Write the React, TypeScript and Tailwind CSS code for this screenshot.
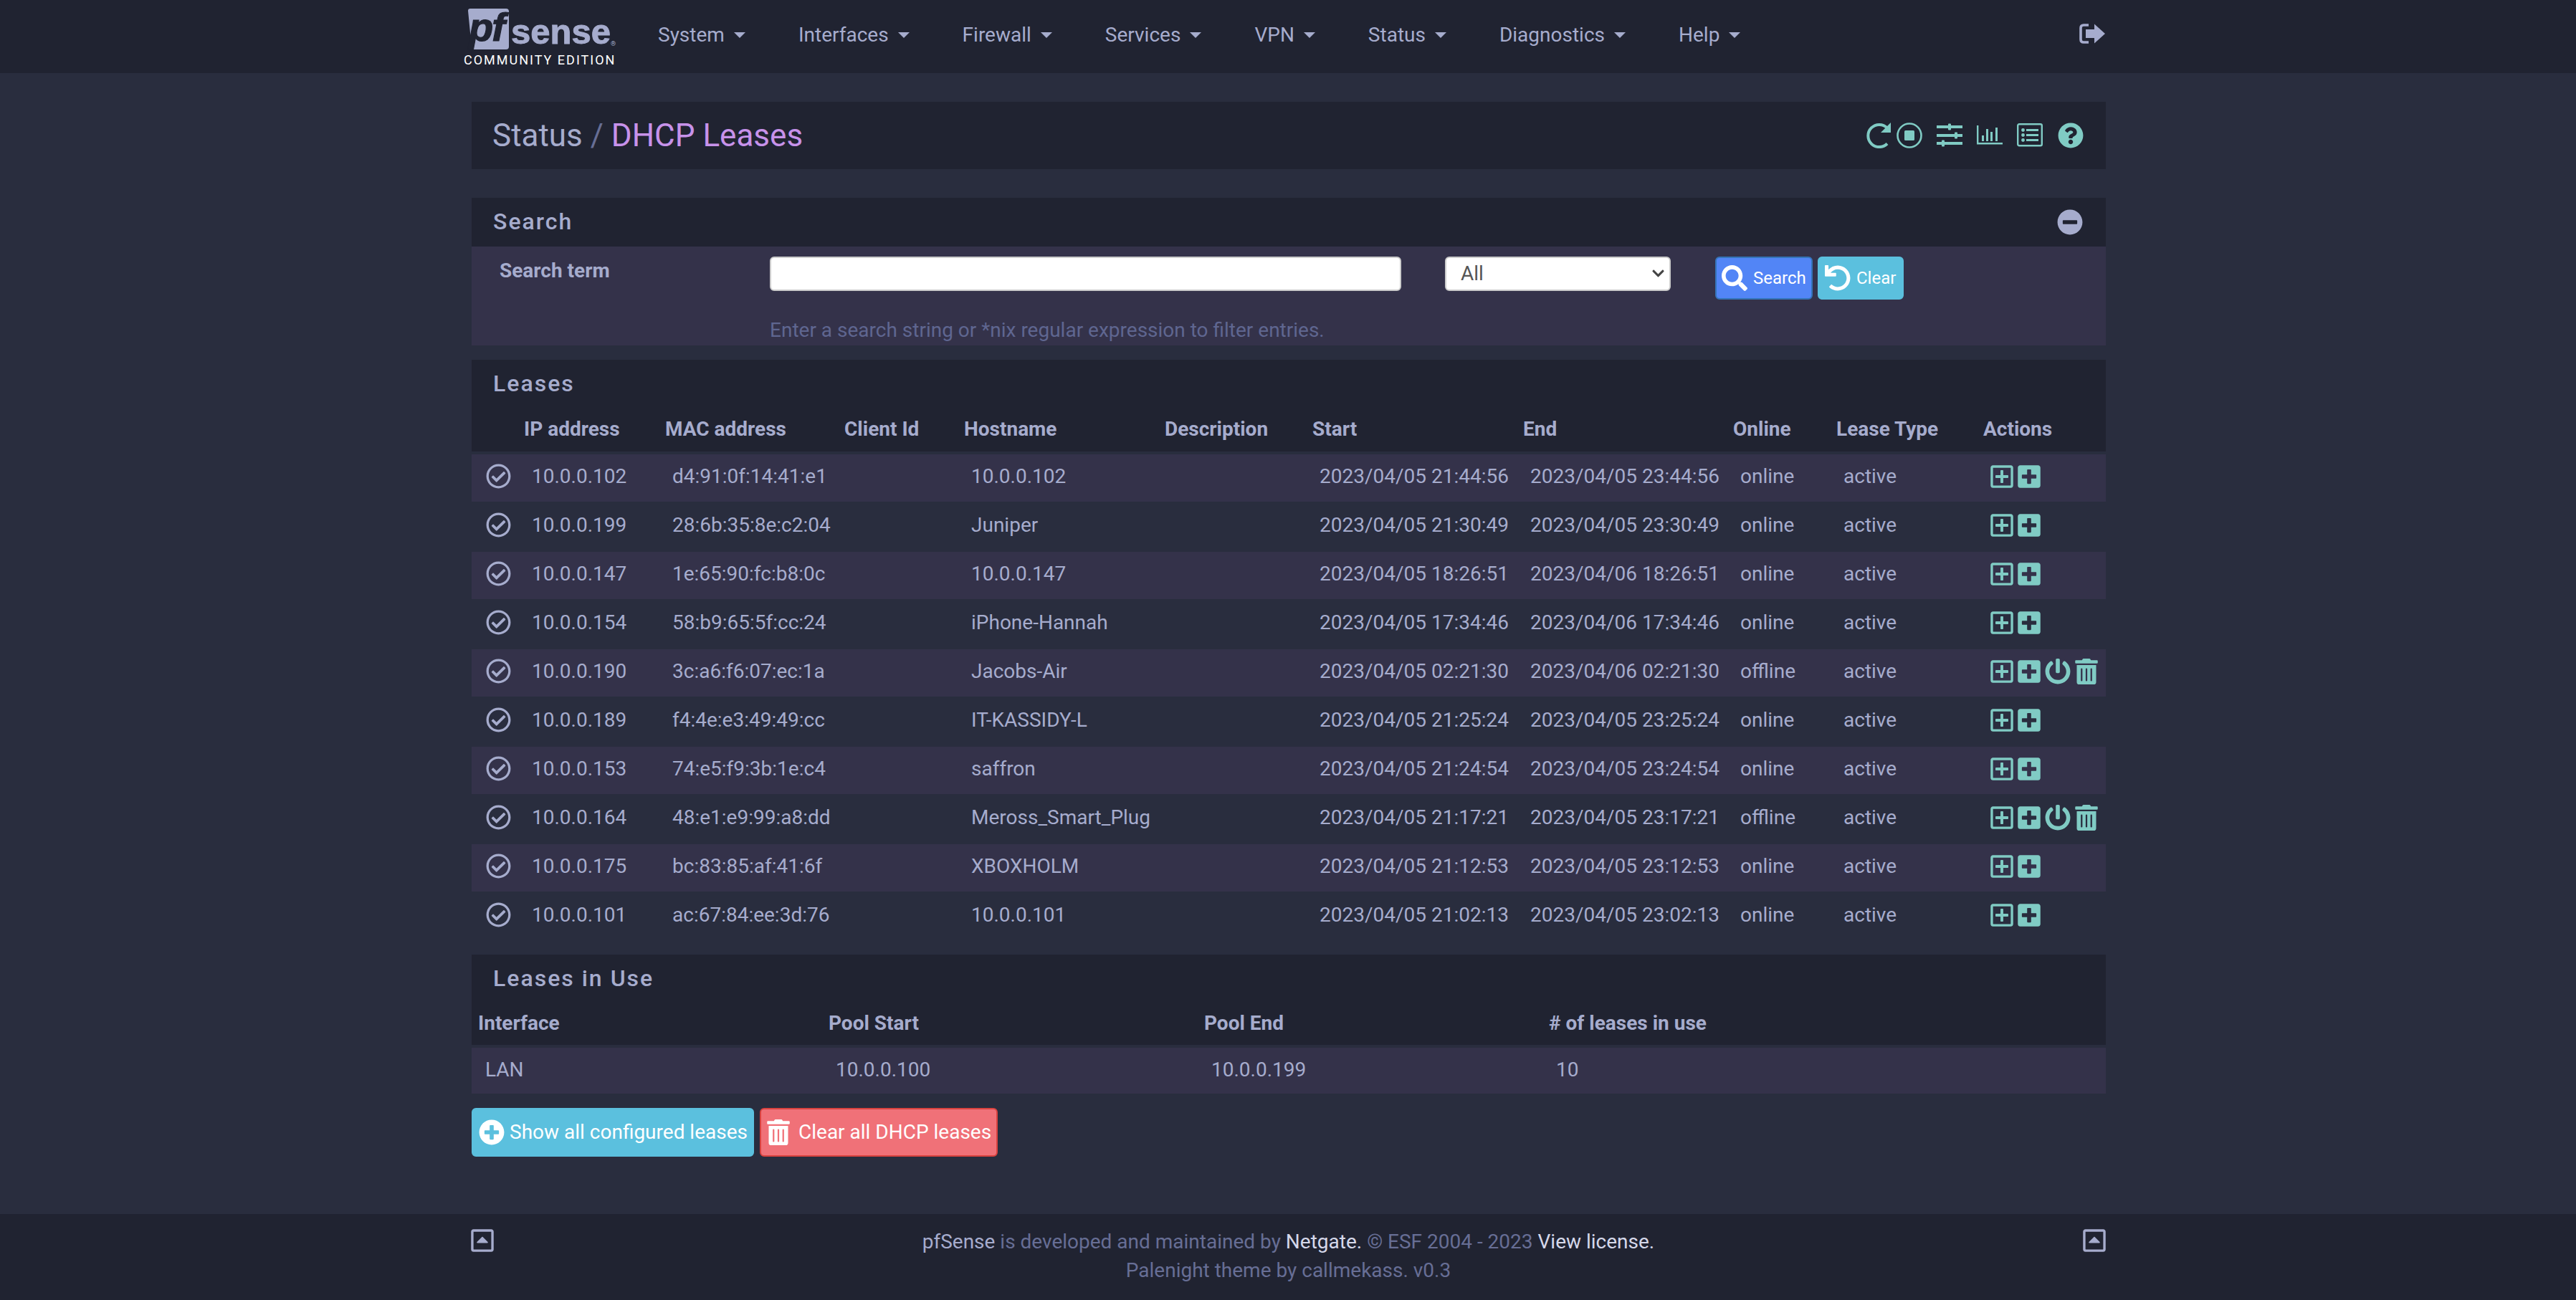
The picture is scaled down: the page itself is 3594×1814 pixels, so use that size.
import React from 'react';
import {
  FaChevronDown,
  FaMinusCircle,
  FaPlusCircle,
  FaPlusSquare,
  FaPowerOff,
  FaQuestionCircle,
  FaRegCaretSquareUp,
  FaRegCheckCircle,
  FaRegPlusSquare,
  FaSearch,
  FaTrashAlt,
  FaUndo,
} from 'react-icons/fa';

interface Lease {
  ip: string;
  mac: string;
  host: string;
  start: string;
  end: string;
  online: string;
}

const NAV_ITEMS = ['System', 'Interfaces', 'Firewall', 'Services', 'VPN', 'Status', 'Diagnostics', 'Help'];

const LEASES: Lease[] = [
  { ip: '10.0.0.102', mac: 'd4:91:0f:14:41:e1', host: '10.0.0.102', start: '2023/04/05 21:44:56', end: '2023/04/05 23:44:56', online: 'online' },
  { ip: '10.0.0.199', mac: '28:6b:35:8e:c2:04', host: 'Juniper', start: '2023/04/05 21:30:49', end: '2023/04/05 23:30:49', online: 'online' },
  { ip: '10.0.0.147', mac: '1e:65:90:fc:b8:0c', host: '10.0.0.147', start: '2023/04/05 18:26:51', end: '2023/04/06 18:26:51', online: 'online' },
  { ip: '10.0.0.154', mac: '58:b9:65:5f:cc:24', host: 'iPhone-Hannah', start: '2023/04/05 17:34:46', end: '2023/04/06 17:34:46', online: 'online' },
  { ip: '10.0.0.190', mac: '3c:a6:f6:07:ec:1a', host: 'Jacobs-Air', start: '2023/04/05 02:21:30', end: '2023/04/06 02:21:30', online: 'offline' },
  { ip: '10.0.0.189', mac: 'f4:4e:e3:49:49:cc', host: 'IT-KASSIDY-L', start: '2023/04/05 21:25:24', end: '2023/04/05 23:25:24', online: 'online' },
  { ip: '10.0.0.153', mac: '74:e5:f9:3b:1e:c4', host: 'saffron', start: '2023/04/05 21:24:54', end: '2023/04/05 23:24:54', online: 'online' },
  { ip: '10.0.0.164', mac: '48:e1:e9:99:a8:dd', host: 'Meross_Smart_Plug', start: '2023/04/05 21:17:21', end: '2023/04/05 23:17:21', online: 'offline' },
  { ip: '10.0.0.175', mac: 'bc:83:85:af:41:6f', host: 'XBOXHOLM', start: '2023/04/05 21:12:53', end: '2023/04/05 23:12:53', online: 'online' },
  { ip: '10.0.0.101', mac: 'ac:67:84:ee:3d:76', host: '10.0.0.101', start: '2023/04/05 21:02:13', end: '2023/04/05 23:02:13', online: 'online' },
];

const LEASE_HEADERS = [
  { label: '', width: 65 },
  { label: 'IP address', width: 197 },
  { label: 'MAC address', width: 250 },
  { label: 'Client Id', width: 167 },
  { label: 'Hostname', width: 280 },
  { label: 'Description', width: 206 },
  { label: 'Start', width: 294 },
  { label: 'End', width: 293 },
  { label: 'Online', width: 144 },
  { label: 'Lease Type', width: 205 },
  { label: 'Actions', width: 179 },
];

const POOL_HEADERS = [
  { label: 'Interface', width: 489 },
  { label: 'Pool Start', width: 524 },
  { label: 'Pool End', width: 481 },
  { label: '# of leases in use', width: 786 },
];

const Caret = () => (
  <span className="ml-[13px] inline-block h-0 w-0 border-x-[8px] border-t-[8px] border-x-transparent border-t-[#a6accd] align-middle" />
);

const SignOutIcon = () => (
  <svg viewBox="0 0 36 28" className="h-[28px] w-[36px]">
    <path d="M13 2H6Q2 2 2 6V22Q2 26 6 26H13" fill="none" stroke="#a6accd" strokeWidth="3.6" />
    <path d="M9 8H21V0.5L36 14L21 27.5V20H9Z" fill="#a6accd" />
  </svg>
);

const RefreshIcon = () => (
  <svg viewBox="0 0 36 36" className="h-[36px] w-[36px]" fill="none">
    <path d="M31 29.5A15.6 15.6 0 1 1 31 7.5" stroke="#80cbc4" strokeWidth="4" />
    <path d="M36 0V14H22Z" fill="#80cbc4" />
  </svg>
);

const StopIcon = () => (
  <svg viewBox="0 0 36 36" className="h-[36px] w-[36px]">
    <circle cx="18" cy="18" r="16.5" fill="none" stroke="#80cbc4" strokeWidth="2.6" />
    <rect x="11" y="11" width="14" height="14" rx="1.5" fill="#80cbc4" />
  </svg>
);

const SlidersIcon = () => (
  <svg viewBox="0 0 36 36" className="h-[36px] w-[36px]" fill="#80cbc4">
    <rect x="0" y="4" width="36" height="4" />
    <rect x="0" y="16" width="36" height="4" />
    <rect x="0" y="27" width="36" height="4" />
    <rect x="16" y="1.5" width="4" height="9" rx="1" />
    <rect x="25" y="13.5" width="4" height="9" rx="1" />
    <rect x="7" y="24.5" width="4" height="9" rx="1" />
  </svg>
);

const BarsIcon = () => (
  <svg viewBox="0 0 36 36" className="h-[36px] w-[36px]" fill="#80cbc4">
    <path d="M0 4h2.4v24H36v2.6H0Z" />
    <rect x="7" y="18" width="3" height="8" />
    <rect x="13" y="9" width="3" height="17" />
    <rect x="19" y="13" width="3" height="13" />
    <rect x="26" y="7" width="3" height="19" />
  </svg>
);

const ListIcon = () => (
  <svg viewBox="0 0 36 36" className="h-[36px] w-[36px]" fill="#80cbc4">
    <rect x="1.2" y="2.2" width="33.6" height="30" rx="2" fill="none" stroke="#80cbc4" strokeWidth="2.4" />
    <circle cx="8.5" cy="10.5" r="2.4" />
    <circle cx="8.5" cy="17.5" r="2.4" />
    <circle cx="8.5" cy="24.5" r="2.4" />
    <rect x="13" y="9" width="17" height="3" />
    <rect x="13" y="16" width="17" height="3" />
    <rect x="13" y="23" width="17" height="3" />
  </svg>
);

const Logo = () => (
  <div className="flex w-[260px] shrink-0 flex-col">
    <div className="flex h-[60px] items-end">
      <svg viewBox="0 0 62 60" className="h-[60px] w-[62px] shrink-0 overflow-visible">
        <path d="M3 0H53Q57 0 57 4V53Q57 57 53 57H8Q5 57 5 54L0 3Q0 0 3 0Z" fill="#a6accd" />
        <text x="1" y="45" fontFamily="Liberation Sans" fontWeight="700" fontStyle="italic" fontSize="56" letterSpacing="-2" fill="#202331" stroke="#202331" strokeWidth="1.2">pf</text>
      </svg>
      <span className="-ml-[2px] mb-[3px] font-['Liberation_Sans',sans-serif] text-[49px] leading-[49px] font-bold text-[#a6accd] [-webkit-text-stroke:1px_#a6accd]">sense</span>
      <span className="mb-[6px] text-[9px] leading-[10px] text-[#a6accd]">®</span>
    </div>
    <span className="mt-[1px] -ml-[6px] text-[18px] leading-[21px] tracking-[2px] text-white">COMMUNITY EDITION</span>
  </div>
);

const PanelTitle = ({ children }: { children: React.ReactNode }) => (
  <h2 className="pb-[2px] text-[32px] leading-[36px] font-medium tracking-[2px] text-[#a6accd]">{children}</h2>
);

const App: React.FC = () => {
  return (
    <div className="flex h-[1814px] flex-col overflow-hidden bg-[#292d3e] font-['Roboto',sans-serif] text-[28px] text-[#a6accd]">
      {/* Navbar */}
      <header className="h-[102px] shrink-0 bg-[#202331]">
        <div className="ml-[658px] flex w-[2280px] items-start">
          <div className="-ml-[5px] pt-[12px]">
            <Logo />
          </div>
          <nav className="-ml-[32px] flex h-[98px] items-center">
            {NAV_ITEMS.map(item => (
              <a key={item} className="flex items-center px-[37px] text-[#a6accd]">
                {item}
                <Caret />
              </a>
            ))}
          </nav>
          <div className="ml-auto pt-[33px] pr-[1px]">
            <SignOutIcon />
          </div>
        </div>
      </header>

      {/* Main content */}
      <main className="ml-[658px] flex w-[2280px] flex-1 flex-col pt-[40px]">
        <section className="flex h-[94px] items-center justify-between bg-[#202331] pr-[31px] pl-[29px]">
          <h1 className="text-[44px] leading-[50px]">
            Status <span className="text-[#676e95]">/</span> <span className="text-[#c792ea]">DHCP Leases</span>
          </h1>
          <div className="flex items-center text-[#80cbc4]">
            <RefreshIcon />
            <span className="ml-[8px]"><StopIcon /></span>
            <span className="ml-[20px]"><SlidersIcon /></span>
            <span className="ml-[20px]"><BarsIcon /></span>
            <span className="ml-[20px]"><ListIcon /></span>
            <span className="ml-[21px]"><FaQuestionCircle size={36} /></span>
          </div>
        </section>

        {/* Search */}
        <section className="mt-[40px]">
          <div className="flex h-[68px] items-center justify-between bg-[#202331] pr-[32px] pl-[30px]">
            <PanelTitle>Search</PanelTitle>
            <FaMinusCircle size={36} className="text-[#a6accd]" />
          </div>
          <div className="h-[138px] bg-[#34324a] pt-[14px] pl-[39px]">
            <div className="flex items-start">
              <label className="w-[377px] leading-[40px] font-bold">Search term</label>
              <input className="h-[48px] w-[881px] rounded-[6px] border-2 border-[#ccc] bg-white" />
              <div className="relative ml-[61px] w-[315px]">
                <select className="h-[48px] w-full appearance-none rounded-[6px] border-2 border-[#ccc] bg-white pl-[20px] text-[#555]">
                  <option>All</option>
                </select>
                <FaChevronDown size={19} className="pointer-events-none absolute top-[14px] right-[8px] text-[#444]" />
              </div>
              <button className="ml-[62px] flex h-[60px] w-[136px] items-center rounded-[6px] border-2 border-[#3574b8] bg-[#5285f6] pl-[7px] text-[24px] text-white">
                <FaSearch size={36} />
                <span className="ml-[8px]">Search</span>
              </button>
              <button className="ml-[7px] flex h-[60px] w-[120px] items-center rounded-[6px] border-2 border-[#5bc0de] bg-[#5bc0de] pl-[8px] text-[24px] text-white">
                <FaUndo size={36} />
                <span className="ml-[8px]">Clear</span>
              </button>
            </div>
            <p className="mt-[22px] ml-[377px] text-[#5f6690]">Enter a search string or *nix regular expression to filter entries.</p>
          </div>
        </section>

        {/* Leases */}
        <section className="mt-[20px]">
          <div className="flex h-[68px] items-center bg-[#202331] pl-[30px]">
            <PanelTitle>Leases</PanelTitle>
          </div>
          <table className="w-full table-fixed border-separate border-spacing-0">
            <colgroup>
              {LEASE_HEADERS.map(h => <col key={h.label} style={{ width: h.width }} />)}
            </colgroup>
            <thead>
              <tr className="bg-[#202331]">
                {LEASE_HEADERS.map(h => (
                  <th key={h.label} className="h-[62px] border-b-2 border-[#292d3e] pb-[2px] pl-[8px] text-left font-bold whitespace-nowrap">{h.label}</th>
                ))}
              </tr>
            </thead>
            <tbody>
              {LEASES.map((lease, i) => {
                const offline = lease.online === 'offline';
                return (
                  <tr key={lease.ip} className={i % 2 === 0 ? 'bg-[#34324a]' : ''}>
                    <td className="h-[68px] border-t-2 border-[#292d3e] pb-[5px] pl-[20px] align-middle"><FaRegCheckCircle size={35} /></td>
                    <td className="border-t-2 border-[#292d3e] pb-[4px] pl-[19px]">{lease.ip}</td>
                    <td className="border-t-2 border-[#292d3e] pb-[4px] pl-[18px] whitespace-nowrap">{lease.mac}</td>
                    <td className="border-t-2 border-[#292d3e] pb-[4px] pl-[18px]"></td>
                    <td className="border-t-2 border-[#292d3e] pb-[4px] pl-[18px] whitespace-nowrap">{lease.host}</td>
                    <td className="border-t-2 border-[#292d3e] pb-[4px] pl-[18px]"></td>
                    <td className="border-t-2 border-[#292d3e] pb-[4px] pl-[18px] whitespace-nowrap">{lease.start}</td>
                    <td className="border-t-2 border-[#292d3e] pb-[4px] pl-[18px] whitespace-nowrap">{lease.end}</td>
                    <td className="border-t-2 border-[#292d3e] pb-[4px] pl-[18px]">{lease.online}</td>
                    <td className="border-t-2 border-[#292d3e] pb-[4px] pl-[18px]">active</td>
                    <td className="border-t-2 border-[#292d3e] pb-[5px] pl-[16px]">
                      <div className="flex items-center gap-[2px] text-[#80cbc4]">
                        <FaRegPlusSquare size={36} />
                        <FaPlusSquare size={36} />
                        {offline && <FaPowerOff size={36} className="ml-[2px]" />}
                        {offline && <FaTrashAlt size={36} className="ml-[2px]" />}
                      </div>
                    </td>
                  </tr>
                );
              })}
            </tbody>
          </table>
        </section>

        {/* Leases in use */}
        <section className="mt-[20px]">
          <div className="flex h-[68px] items-center bg-[#202331] pl-[30px]">
            <PanelTitle>Leases in Use</PanelTitle>
          </div>
          <table className="w-full table-fixed border-separate border-spacing-0">
            <colgroup>
              {POOL_HEADERS.map(h => <col key={h.label} style={{ width: h.width }} />)}
            </colgroup>
            <thead>
              <tr className="bg-[#202331]">
                {POOL_HEADERS.map(h => (
                  <th key={h.label} className="h-[60px] border-b-2 border-[#292d3e] pb-[2px] pl-[9px] text-left font-bold">{h.label}</th>
                ))}
              </tr>
            </thead>
            <tbody>
              <tr className="bg-[#34324a]">
                <td className="h-[66px] border-t-2 border-[#292d3e] pb-[2px] pl-[19px]">LAN</td>
                <td className="border-t-2 border-[#292d3e] pb-[2px] pl-[19px]">10.0.0.100</td>
                <td className="border-t-2 border-[#292d3e] pb-[2px] pl-[19px]">10.0.0.199</td>
                <td className="border-t-2 border-[#292d3e] pb-[2px] pl-[19px]">10</td>
              </tr>
            </tbody>
          </table>
        </section>

        <div className="mt-[20px] flex gap-[8px]">
          <button className="flex h-[68px] w-[394px] items-center rounded-[6px] border-2 border-[#5bc0de] bg-[#5bc0de] pl-[8px] text-white">
            <FaPlusCircle size={36} />
            <span className="ml-[7px]">Show all configured leases</span>
          </button>
          <button className="flex h-[68px] w-[332px] items-center rounded-[6px] border-2 border-[#d9423f] bg-[#f07178] pl-[6px] text-white">
            <FaTrashAlt size={36} />
            <span className="ml-[10px]">Clear all DHCP leases</span>
          </button>
        </div>
      </main>

      {/* Footer */}
      <footer className="h-[120px] shrink-0 bg-[#202331]">
        <div className="ml-[658px] flex w-[2280px] items-start justify-between pt-[19px]">
          <FaRegCaretSquareUp size={36} className="-ml-[3px]" />
          <div className="text-center leading-[40px] text-[#676e95]">
            <p><span className="text-[#a6accd]">pfSense</span> is developed and maintained by <span className="text-[#d5d8ea]">Netgate.</span> © ESF 2004 - 2023 <span className="text-[#d5d8ea]">View license.</span></p>
            <p>Palenight theme by callmekass. v0.3</p>
          </div>
          <FaRegCaretSquareUp size={36} className="-mr-[2px]" />
        </div>
      </footer>
    </div>
  );
};

export default App;
